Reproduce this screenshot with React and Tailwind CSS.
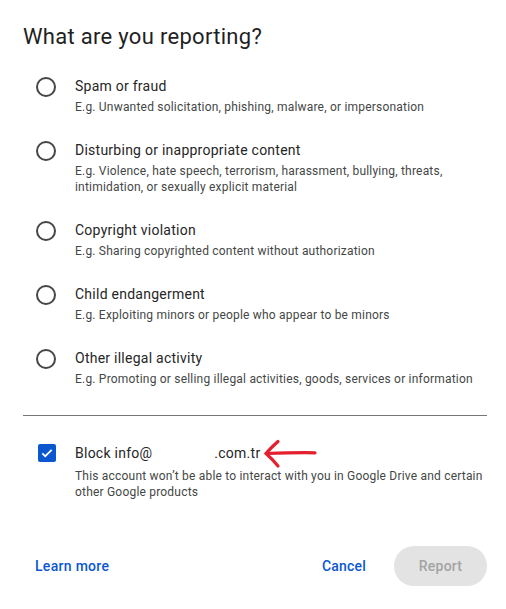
const reasons = [
    { title: "Spam or fraud", desc: "E.g. Unwanted solicitation, phishing, malware, or impersonation" },
    { title: "Disturbing or inappropriate content", desc: "E.g. Violence, hate speech, terrorism, harassment, bullying, threats, intimidation, or sexually explicit material" },
    { title: "Copyright violation", desc: "E.g. Sharing copyrighted content without authorization" },
    { title: "Child endangerment", desc: "E.g. Exploiting minors or people who appear to be minors" },
    { title: "Other illegal activity", desc: "E.g. Promoting or selling illegal activities, goods, services or information" },
];

function Radio() {
    return <span className="mt-[2px] w-5 h-5 shrink-0 rounded-full border-2 border-[#444746]" />;
}

export default function App() {
    return (
        <div className="w-[506px] h-[609px] bg-white text-[#1f1f1f] font-['Roboto',sans-serif] overflow-hidden">
            <h2 className="pl-[23px] pt-[22px] text-[22px] leading-[30px] tracking-[0.3px] text-[#1f1f1f]">What are you reporting?</h2>

            <div className="mt-[23px] flex flex-col gap-[24px]">
                {reasons.map(r => (
                    <div key={r.title} className="flex pl-[36px] pr-4">
                        <Radio />
                        <div className="ml-[19px]">
                            <div className="text-[14px] leading-[24px] -mt-[1px] tracking-[0.25px] text-[#262626]">{r.title}</div>
                            <div className="mt-[1px] text-[12px] leading-[16px] tracking-[0.2px] text-[#444746]">{r.desc}</div>
                        </div>
                    </div>
                ))}
            </div>

            <div className="ml-[23px] mr-[19px] mt-[28px] border-t border-[#747775]" />

            <div className="flex pl-[38px] pr-4 mt-[27px]">
                <span className="mt-[1px] w-[18px] h-[18px] shrink-0 rounded-[2px] bg-[#0b57d0] flex items-center justify-center">
                    <svg width="14" height="14" viewBox="0 0 24 24" fill="none" stroke="white" strokeWidth="3">
                        <path d="M4 12.5l5 5L20 6.5" />
                    </svg>
                </span>
                <div className="ml-[19px]">
                    <div className="relative text-[14px] leading-[20px] tracking-[0.25px] text-[#262626] flex">
                        <span>Block info@</span>
                        <span className="w-[62px]" />
                        <span>.com.tr</span>
                        <svg className="absolute left-[188px] -top-[4px]" width="56" height="30" viewBox="0 0 56 30" fill="none" stroke="#e4202e" strokeWidth="3.2" strokeLinecap="round" strokeLinejoin="round">
                            <path d="M3 14.5 C18 14 36 13.5 52 13.8" />
                            <path d="M15 2.5 C10 7 6 11 3 14.5 C7 18 11 22 15 27" />
                        </svg>
                    </div>
                    <div className="mt-[5px] text-[12px] leading-[16px] tracking-[0.2px] text-[#444746]">
                        This account won’t be able to interact with you in Google Drive and certain other Google products
                    </div>
                </div>
            </div>

            <div className="flex items-center justify-between pl-[35px] pr-[19px] mt-[46px]">
                <button className="text-[14px] font-medium tracking-[0.3px] text-[#0b57d0]">Learn more</button>
                <div className="flex items-center gap-[28px]">
                    <button className="text-[14px] font-medium tracking-[0.2px] text-[#0b57d0]">Cancel</button>
                    <button className="w-[93px] h-[40px] rounded-full bg-[#e3e3e3] text-[14px] font-medium tracking-[0.2px] text-[#a3a3a3]">Report</button>
                </div>
            </div>
        </div>
    );
}
